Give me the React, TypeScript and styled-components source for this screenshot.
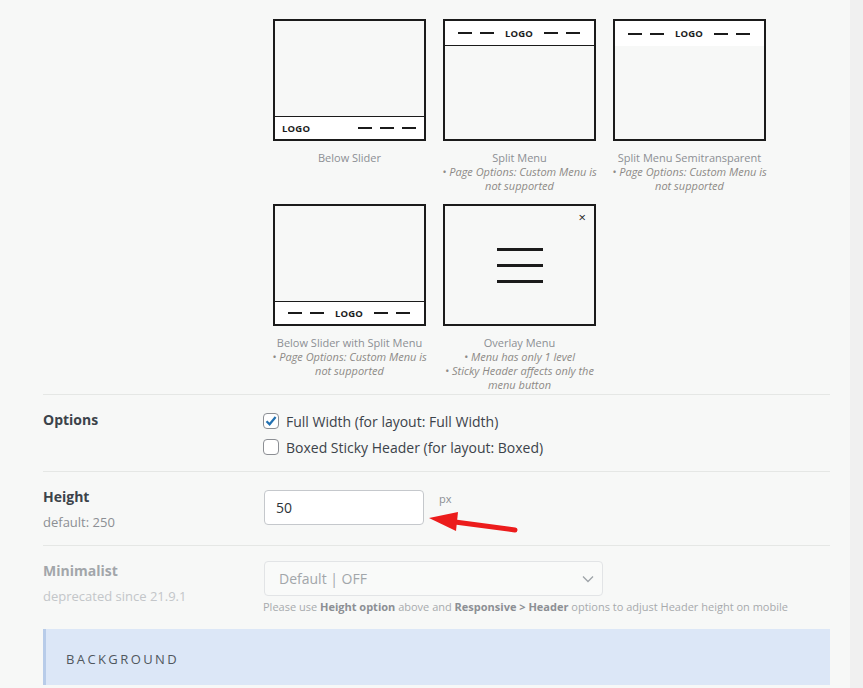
import * as React from 'react'
import styled, { createGlobalStyle } from 'styled-components'

const GlobalStyle = createGlobalStyle`
  body {
    margin: 0;
    background: #f0f0f0;
    font-family: 'Open Sans', 'Liberation Sans', sans-serif;
  }
`

const Panel = styled.div`
  width: 850px;
  min-height: 688px;
  box-sizing: border-box;
  background: #f7f8f7;
  padding: 19px 20px 3px 43px;
`
const Row = styled.div<{ top?: number; bottom?: number; first?: boolean }>`
  display: grid;
  grid-template-columns: 220px 1fr;
  border-top: ${p => (p.first ? 'none' : '1px solid #e5e7e5')};
  padding-top: ${p => p.top ?? 0}px;
  padding-bottom: ${p => p.bottom ?? 0}px;
`
const LabelCol = styled.div`
  display: flex;
  flex-direction: column;
`
const Label = styled.span<{ muted?: boolean }>`
  font-size: 14px;
  font-weight: 700;
  line-height: 24px;
  color: ${p => (p.muted ? '#a2a6aa' : '#3c434a')};
`
const SubLabel = styled.span<{ muted?: boolean }>`
  font-size: 13px;
  line-height: 20px;
  margin-top: 3px;
  color: ${p => (p.muted ? '#c3c6c9' : '#8c8f94')};
`
const LayoutGrid = styled.div`
  display: grid;
  grid-template-columns: repeat(3, 153px);
  column-gap: 17px;
  row-gap: 11px;
  padding-left: 10px;
  padding-bottom: 2px;
`
const LayoutItem = styled.div`
  display: flex;
  flex-direction: column;
  align-items: center;
`
const Thumb = styled.div<{ justify: string }>`
  position: relative;
  width: 153px;
  height: 122px;
  box-sizing: border-box;
  border: 2px solid #1b1b1b;
  background: #f7f8f7;
  display: flex;
  flex-direction: column;
  justify-content: ${p => p.justify};
`
const Band = styled.div<{ line?: 'top' | 'bottom'; split?: boolean; h: number }>`
  height: ${p => p.h}px;
  box-sizing: border-box;
  background: #fff;
  display: flex;
  align-items: center;
  gap: 8px;
  justify-content: ${p => (p.split ? 'center' : 'space-between')};
  padding: 0 8px 0 7px;
  border-top: ${p => (p.line === 'top' ? '1px solid #1b1b1b' : 'none')};
  border-bottom: ${p => (p.line === 'bottom' ? '1px solid #1b1b1b' : 'none')};
`
const Logo = styled.span<{ split?: boolean }>`
  font-size: 9.5px;
  font-weight: 700;
  letter-spacing: 0.2px;
  color: #1b1b1b;
  margin: ${p => (p.split ? '0 3px' : '0')};
`
const Dashes = styled.span`
  display: flex;
  gap: 8px;
`
const Dash = styled.span`
  width: 14px;
  height: 2px;
  background: #1b1b1b;
`
const Burger = styled.div`
  display: flex;
  flex-direction: column;
  align-items: center;
  gap: 13px;
`
const BurgerLine = styled.span`
  width: 46px;
  height: 3px;
  background: #1b1b1b;
`
const Close = styled.span`
  position: absolute;
  top: 3px;
  right: 8px;
  font-size: 13px;
  line-height: 16px;
  color: #1b1b1b;
`
const Caption = styled.div`
  width: 163px;
  margin-top: 10px;
  text-align: center;
  font-size: 11px;
  line-height: 14px;
  color: #8c8f94;
`
const Note = styled.div`
  font-style: italic;
  color: #8d8a86;
`
const CheckList = styled.div`
  display: flex;
  flex-direction: column;
`
const CheckRow = styled.label`
  display: flex;
  align-items: center;
  gap: 7px;
  height: 26px;
  font-size: 14px;
  color: #3c434a;
`
const Box = styled.span`
  width: 16px;
  height: 16px;
  box-sizing: border-box;
  border: 1px solid #8c8f94;
  border-radius: 4px;
  background: #fff;
  display: flex;
  align-items: center;
  justify-content: center;
`
const FieldLine = styled.div`
  position: relative;
  display: flex;
  align-items: flex-start;
  gap: 15px;
  margin-top: 5px;
  margin-left: 1px;
`
const Input = styled.div`
  width: 160px;
  height: 35px;
  box-sizing: border-box;
  border: 1px solid #c5c8cc;
  border-radius: 4px;
  background: #fff;
  padding-left: 11px;
  display: flex;
  align-items: center;
  font-size: 14px;
  color: #2c3338;
`
const Unit = styled.span`
  font-size: 11px;
  line-height: 18px;
  color: #8c8f94;
`
const Arrow = styled.svg`
  position: absolute;
  left: 163px;
  top: 18px;
`
const Select = styled.div`
  width: 339px;
  height: 35px;
  margin: 2px 0 0 1px;
  box-sizing: border-box;
  border: 1px solid #e2e4e6;
  border-radius: 4px;
  background: #f9faf9;
  padding: 0 8px 0 14px;
  display: flex;
  align-items: center;
  justify-content: space-between;
  font-size: 14px;
  color: #a2a6aa;
`
const Help = styled.div`
  margin-top: 4px;
  font-size: 11px;
  line-height: 14px;
  color: #a7aaad;
  white-space: nowrap;
  b {
    font-weight: 700;
    color: #8c8f94;
  }
`
const SectionHead = styled.div`
  height: 56px;
  box-sizing: border-box;
  background: #dce7f7;
  border-left: 3px solid #b8cce9;
  padding-left: 20px;
  padding-top: 3px;
  display: flex;
  align-items: center;
  font-size: 13px;
  letter-spacing: 2.4px;
  color: #50575e;
`

const SplitBand = ({ line, h }: { line?: 'top' | 'bottom'; h: number }) => (
  <Band split line={line} h={h}>
    <Dashes>
      <Dash />
      <Dash />
    </Dashes>
    <Logo split>LOGO</Logo>
    <Dashes>
      <Dash />
      <Dash />
    </Dashes>
  </Band>
)

const NOT_SUPPORTED = '• Page Options: Custom Menu is not supported'

export default function App() {
  return (
    <>
      <GlobalStyle />
      <Panel>
        <Row first>
          <LabelCol />
          <LayoutGrid>
            <LayoutItem>
              <Thumb justify="flex-end">
                <Band line="top" h={23}>
                  <Logo>LOGO</Logo>
                  <Dashes>
                    <Dash />
                    <Dash />
                    <Dash />
                  </Dashes>
                </Band>
              </Thumb>
              <Caption>Below Slider</Caption>
            </LayoutItem>
            <LayoutItem>
              <Thumb justify="flex-start">
                <SplitBand line="bottom" h={25} />
              </Thumb>
              <Caption>
                Split Menu
                <Note>{NOT_SUPPORTED}</Note>
              </Caption>
            </LayoutItem>
            <LayoutItem>
              <Thumb justify="flex-start">
                <SplitBand h={25} />
              </Thumb>
              <Caption>
                Split Menu Semitransparent
                <Note>{NOT_SUPPORTED}</Note>
              </Caption>
            </LayoutItem>
            <LayoutItem>
              <Thumb justify="flex-end">
                <SplitBand line="top" h={23} />
              </Thumb>
              <Caption>
                Below Slider with Split Menu
                <Note>{NOT_SUPPORTED}</Note>
              </Caption>
            </LayoutItem>
            <LayoutItem>
              <Thumb justify="center">
                <Close>×</Close>
                <Burger>
                  <BurgerLine />
                  <BurgerLine />
                  <BurgerLine />
                </Burger>
              </Thumb>
              <Caption>
                Overlay Menu
                <Note>• Menu has only 1 level</Note>
                <Note>• Sticky Header affects only the menu button</Note>
              </Caption>
            </LayoutItem>
          </LayoutGrid>
        </Row>

        <Row top={13} bottom={11}>
          <LabelCol>
            <Label>Options</Label>
          </LabelCol>
          <CheckList>
            <CheckRow>
              <Box>
                <svg width="12" height="12" viewBox="0 0 12 12">
                  <path d="M1.5 6.2 L4.6 9.3 L10.6 2" fill="none" stroke="#2271b1" strokeWidth="2.2" />
                </svg>
              </Box>
              Full Width (for layout: Full Width)
            </CheckRow>
            <CheckRow>
              <Box />
              Boxed Sticky Header (for layout: Boxed)
            </CheckRow>
          </CheckList>
        </Row>

        <Row top={13} bottom={13}>
          <LabelCol>
            <Label>Height</Label>
            <SubLabel>default: 250</SubLabel>
          </LabelCol>
          <FieldLine>
            <Input>50</Input>
            <Unit>px</Unit>
            <Arrow width="96" height="28" viewBox="0 0 96 28">
              <path d="M28 14 L88 22" stroke="#ec1c1c" strokeWidth="5" strokeLinecap="round" />
              <path d="M2 10 L31 4 L29 23 Z" fill="#ec1c1c" />
            </Arrow>
          </FieldLine>
        </Row>

        <Row top={13} bottom={15}>
          <LabelCol>
            <Label muted>Minimalist</Label>
            <SubLabel muted>deprecated since 21.9.1</SubLabel>
          </LabelCol>
          <div>
            <Select>
              Default | OFF
              <svg width="12" height="8" viewBox="0 0 12 8">
                <path d="M1 1.5 L6 6.5 L11 1.5" fill="none" stroke="#9ea3a8" strokeWidth="1.3" />
              </svg>
            </Select>
            <Help>
              Please use <b>Height option</b> above and <b>Responsive &gt; Header</b> options to adjust
              Header height on mobile
            </Help>
          </div>
        </Row>

        <SectionHead>BACKGROUND</SectionHead>
      </Panel>
    </>
  )
}
